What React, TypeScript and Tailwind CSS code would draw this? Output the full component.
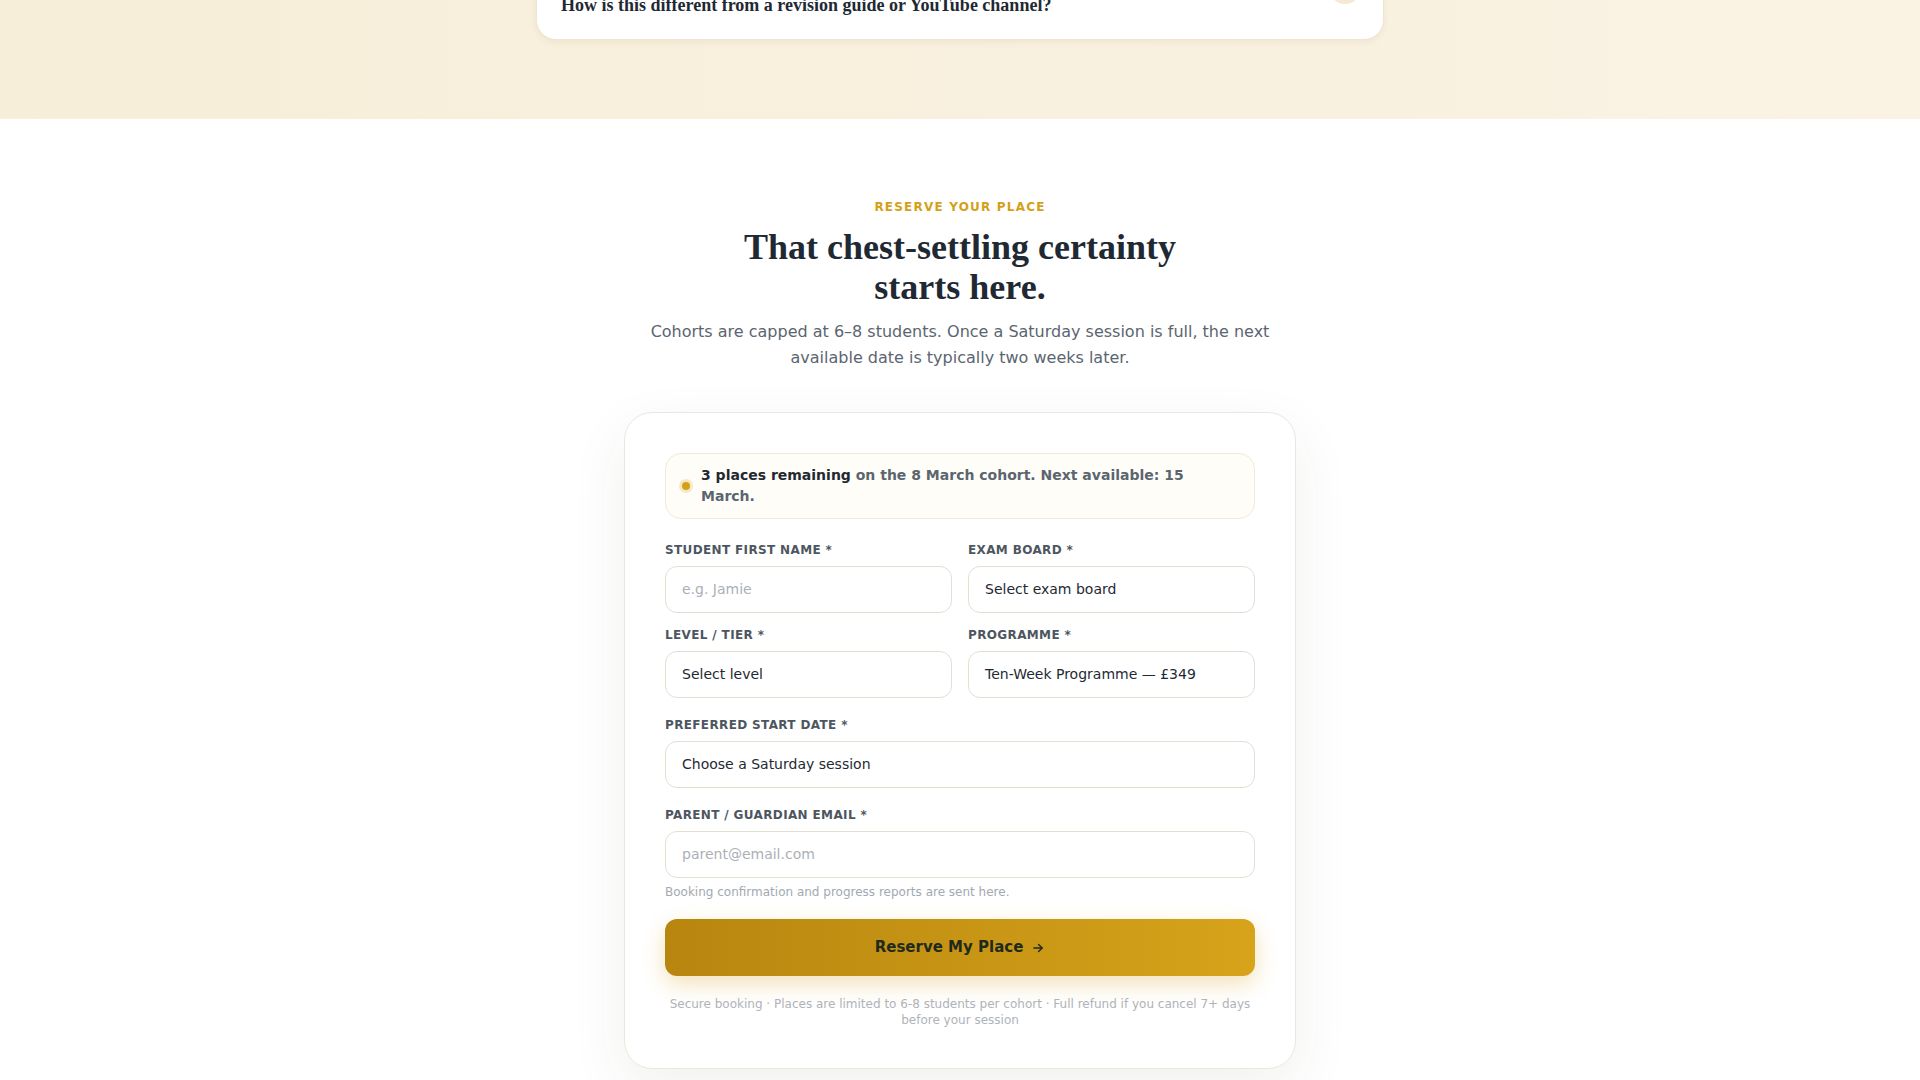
export default function App() {
  const sans = { fontFamily: '"DejaVu Sans", "Noto Sans", sans-serif' };
  return (
    <main className="min-h-screen bg-white text-[#1f2933]" style={sans}>
      {/* FAQ tail */}
      <section className="bg-gradient-to-r from-[#f7eed9] to-[#faf2e3] pb-[79px]">
        <div className="mx-auto max-w-4xl px-6">
          <div className="-mt-[32px] flex items-start justify-between rounded-[20px] border border-[#efe6d2] bg-white pb-[20px] pl-6 pr-[22px] pt-[22px] shadow-[0_2px_6px_rgba(120,100,50,0.08)]">
            <h3 className="font-['Liberation_Serif',serif] text-[18px] font-bold leading-[28px] text-[#1f2933]">
              How is this different from a revision guide or YouTube channel?
            </h3>
            <span className="-mt-[19px] flex h-8 w-8 shrink-0 items-center justify-center rounded-full bg-[#f4ead3]" />
          </div>
        </div>
      </section>

      {/* Booking Section */}
      <section className="px-6 pb-24 pt-[80px]">
        <div className="mx-auto flex max-w-3xl flex-col items-center text-center">
          <p className="text-[12px] font-bold uppercase leading-4 tracking-[0.1em] text-[#d4a017]">
            Reserve your place
          </p>
          <h2 className="mt-3 max-w-md font-['Liberation_Serif',serif] text-4xl font-bold text-[#1f2933]">
            That chest-settling certainty starts here.
          </h2>
          <p className="mt-3 max-w-2xl text-base leading-[1.6] text-[#5b6570]">
            Cohorts are capped at 6–8 students. Once a Saturday session is full, the next available date is typically two weeks later.
          </p>
        </div>

        <div className="mx-auto mt-[42px] max-w-2xl rounded-[28px] border border-[#ebe7de] bg-white p-10 shadow-[0_20px_60px_rgba(60,50,20,0.07)]">
          {/* Availability notice */}
          <div className="mb-[23px] flex items-center gap-[11px] rounded-2xl border border-[#f1ead8] bg-[#fffdf8] px-4 py-[11px]">
            <span className="h-2 w-2 shrink-0 rounded-full bg-[#d4a017] shadow-[0_0_0_3px_rgba(212,160,23,0.22)]" />
            <p className="text-[14px] font-bold leading-[21px] text-[#5b6570]">
              <span className="text-[#1f2933]">3 places remaining</span> on the 8 March cohort. Next available: 15 March.
            </p>
          </div>

          <form className="flex flex-col gap-[19px]">
            <div className="grid grid-cols-2 gap-x-4 gap-y-[14px]">
              <Field label="Student first name *">
                <input
                  type="text"
                  placeholder="e.g. Jamie"
                  className="w-full rounded-xl border border-[#e4dfd3] bg-white px-4 py-3 text-[14px] leading-[21px] text-[#1f2933] outline-none placeholder:text-[#abb0b6]"
                />
              </Field>
              <Field label="Exam board *">
                <SelectBox value="Select exam board" />
              </Field>
              <Field label="Level / Tier *">
                <SelectBox value="Select level" />
              </Field>
              <Field label="Programme *">
                <SelectBox value="Ten-Week Programme — £349" />
              </Field>
            </div>

            <Field label="Preferred start date *">
              <SelectBox value="Choose a Saturday session" />
            </Field>

            <div>
              <Field label="Parent / Guardian email *">
                <input
                  type="email"
                  placeholder="parent@email.com"
                  className="w-full rounded-xl border border-[#e4dfd3] bg-white px-4 py-3 text-[14px] leading-[21px] text-[#1f2933] outline-none placeholder:text-[#abb0b6]"
                />
              </Field>
              <p className="mt-1.5 text-[12px] leading-4 text-[#a3a9b0]">
                Booking confirmation and progress reports are sent here.
              </p>
            </div>

            <button
              type="button"
              className="flex w-full items-center justify-center gap-2 rounded-xl bg-gradient-to-r from-[#b8860f] to-[#d6a31a] py-[17px] text-[15px] font-bold leading-[23px] text-[#1f2a1c] shadow-[0_8px_22px_rgba(212,160,23,0.3)]"
            >
              Reserve My Place
              <svg width="14" height="14" viewBox="0 0 24 24" fill="none" stroke="currentColor" strokeWidth="2.5" strokeLinecap="round" strokeLinejoin="round">
                <path d="M5 12h14" />
                <path d="M13 6l6 6-6 6" />
              </svg>
            </button>
          </form>

          <p className="mt-5 text-center text-[12px] leading-4 text-[#aeb3b9]">
            Secure booking · Places are limited to 6-8 students per cohort · Full refund if you cancel 7+ days before your session
          </p>
        </div>
      </section>
    </main>
  );
}

function Field({ label, children }: { label: string; children: React.ReactNode }) {
  return (
    <label className="block">
      <span className="mb-2 block text-[12px] font-bold uppercase leading-4 tracking-[0.03em] text-[#4d5660]">
        {label}
      </span>
      {children}
    </label>
  );
}

function SelectBox({ value }: { value: string }) {
  return (
    <div className="w-full rounded-xl border border-[#e4dfd3] bg-white px-4 py-3 text-left text-[14px] leading-[21px] text-[#1f2933]">
      {value}
    </div>
  );
}
